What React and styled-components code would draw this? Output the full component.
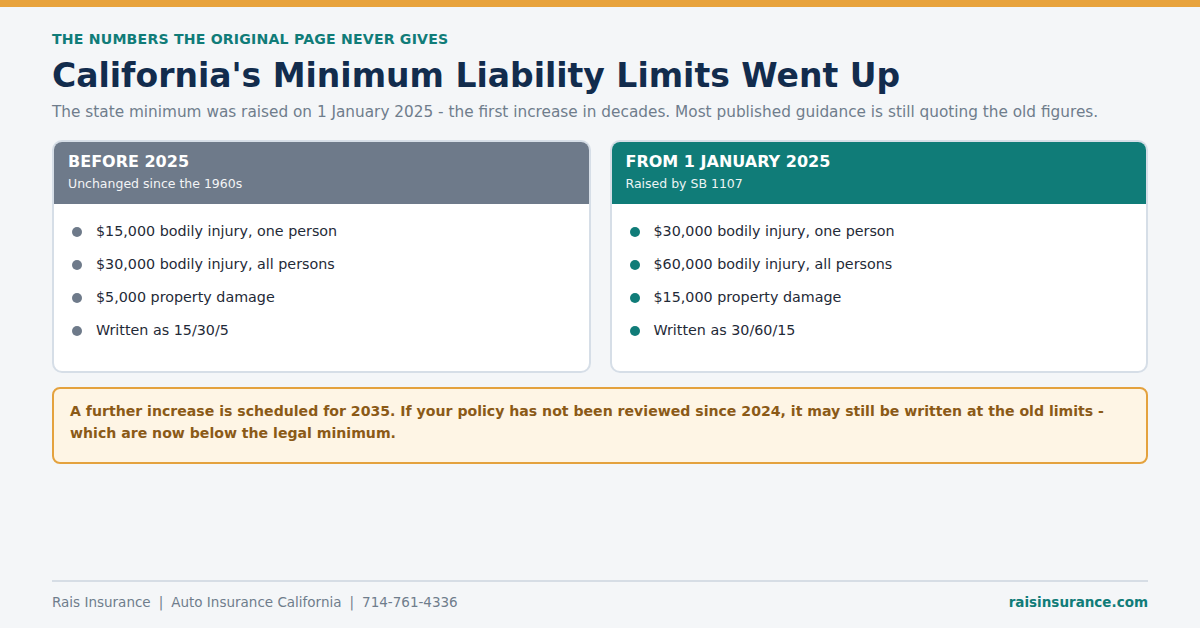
import React from "react";
import styled, { createGlobalStyle } from "styled-components";

const GlobalStyle = createGlobalStyle`
  html, body { margin: 0; padding: 0; }
  body {
    width: 1200px;
    height: 628px;
    overflow: hidden;
    background: #f4f6f8;
    font-family: "DejaVu Sans", "Liberation Sans", sans-serif;
  }
`;

const Page = styled.div`
  width: 1200px;
  height: 628px;
  display: flex;
  flex-direction: column;
  border-top: 7px solid #e8a33d;
  box-sizing: border-box;
`;

const Main = styled.main`
  flex: 1;
  padding: 22px 52px 0 52px;
  display: flex;
  flex-direction: column;
`;

const Kicker = styled.div`
  color: #107c78;
  font-weight: bold;
  font-size: 14.1px;
  letter-spacing: 0.2px;
  text-transform: uppercase;
  line-height: 20px;
`;

const Title = styled.h1`
  margin: 6px 0 0;
  color: #122c4d;
  font-size: 33px;
  line-height: 42px;
  font-weight: bold;
`;

const Lede = styled.p`
  margin: 4px 0 0;
  color: #6f7d8c;
  font-size: 15.3px;
  line-height: 22px;
`;

const Columns = styled.div`
  display: grid;
  grid-template-columns: 1fr 1fr;
  gap: 19px;
  margin-top: 17px;
`;

const Card = styled.section`
  background: #fff;
  border: 2px solid #d6dee7;
  border-radius: 10px;
  overflow: hidden;
  height: 233px;
  box-sizing: border-box;
`;

const CardHead = styled.div`
  background: ${(p) => p.$tone};
  padding: 11px 16px 0;
  height: 64px;
  box-sizing: border-box;
  color: #fff;
  margin: -2px -2px 0;
`;

const CardTitle = styled.div`
  font-weight: bold;
  font-size: 16px;
  line-height: 22px;
`;

const CardSub = styled.div`
  font-size: 12.5px;
  line-height: 18px;
  margin-top: 2px;
  opacity: 0.92;
`;

const List = styled.ul`
  list-style: none;
  margin: 0;
  padding: 11px 0 0 18px;
`;

const Item = styled.li`
  display: flex;
  align-items: center;
  gap: 14px;
  color: #1f2a37;
  font-size: 14.3px;
  line-height: 33px;

  &::before {
    content: "";
    width: 10px;
    height: 10px;
    border-radius: 50%;
    background: ${(p) => p.$dot};
    flex: none;
  }
`;

const Callout = styled.div`
  margin-top: 14px;
  background: #fef5e5;
  border: 2px solid #e4a23e;
  border-radius: 8px;
  padding: 11px 16px 14px;
  color: #8b5a17;
  font-weight: bold;
  font-size: 14.1px;
  line-height: 22px;
  box-sizing: border-box;
  height: 77px;
`;

const Footer = styled.footer`
  margin: 0 52px 6px;
  border-top: 2px solid #d6dde5;
  height: 40px;
  display: flex;
  align-items: center;
  justify-content: space-between;
  font-size: 13.5px;
  color: #6f7d8c;
`;

const Brand = styled.span`
  color: #107c78;
  font-weight: bold;
`;

const Sep = styled.span`
  margin: 0 8px;
`;

const cards = [
  {
    title: "BEFORE 2025",
    sub: "Unchanged since the 1960s",
    tone: "#6e7a8a",
    dot: "#6e7a8a",
    items: [
      "$15,000 bodily injury, one person",
      "$30,000 bodily injury, all persons",
      "$5,000 property damage",
      "Written as 15/30/5",
    ],
  },
  {
    title: "FROM 1 JANUARY 2025",
    sub: "Raised by SB 1107",
    tone: "#107c78",
    dot: "#107c78",
    items: [
      "$30,000 bodily injury, one person",
      "$60,000 bodily injury, all persons",
      "$15,000 property damage",
      "Written as 30/60/15",
    ],
  },
];

export default function App() {
  return (
    <>
      <GlobalStyle />
      <Page>
        <Main>
          <Kicker>The numbers the original page never gives</Kicker>
          <Title>California's Minimum Liability Limits Went Up</Title>
          <Lede>
            The state minimum was raised on 1 January 2025 - the first increase in decades. Most
            published guidance is still quoting the old figures.
          </Lede>
          <Columns>
            {cards.map((c) => (
              <Card key={c.title}>
                <CardHead $tone={c.tone}>
                  <CardTitle>{c.title}</CardTitle>
                  <CardSub>{c.sub}</CardSub>
                </CardHead>
                <List>
                  {c.items.map((t) => (
                    <Item key={t} $dot={c.dot}>{t}</Item>
                  ))}
                </List>
              </Card>
            ))}
          </Columns>
          <Callout>
            A further increase is scheduled for 2035. If your policy has not been reviewed since
            2024, it may still be written at the old limits - which are now below the legal minimum.
          </Callout>
        </Main>
        <Footer>
          <span>
            Rais Insurance<Sep>|</Sep>Auto Insurance California<Sep>|</Sep>714-761-4336
          </span>
          <Brand>raisinsurance.com</Brand>
        </Footer>
      </Page>
    </>
  );
}
